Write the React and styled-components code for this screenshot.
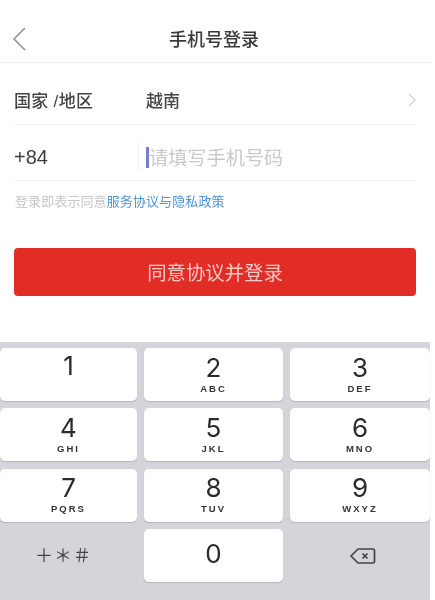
import React from 'react';
import styled, { createGlobalStyle } from 'styled-components';

const GlobalStyle = createGlobalStyle`
  html, body {
    margin: 0;
    padding: 0;
    background: #fff;
  }
  body {
    font-family: "Liberation Sans", "Noto Sans CJK SC", sans-serif;
  }
`;

const Page = styled.div`
  width: 435px;
  height: 600px;
  overflow: hidden;
  display: flex;
  flex-direction: column;
  background: #fff;
  filter: blur(0.6px);
`;

const Header = styled.header`
  display: flex;
  align-items: center;
  justify-content: center;
  position: relative;
  height: 63px;
  margin-right: 3px;
  padding-top: 13px;
  box-sizing: border-box;
  border-bottom: 1px solid #eeeeee;
`;

const BackIcon = styled.svg`
  position: absolute;
  left: 11px;
  top: 26px;
  width: 16px;
  height: 26px;
  fill: none;
  stroke: #8f8f8f;
  stroke-width: 1.5px;
`;

const Title = styled.h1`
  margin: 0;
  font-size: 18px;
  font-weight: 500;
  color: #3a3a3a;
  transform: translateX(-2px);
`;

const Form = styled.section`
  display: flex;
  flex-direction: column;
  margin: 0 19px 0 14px;
`;

const Row = styled.div`
  display: flex;
  align-items: center;
  height: ${({ $height }) => $height}px;
  padding-top: ${({ $pad }) => $pad}px;
  box-sizing: border-box;
  border-bottom: 1px solid #f0f0f0;
`;

const Label = styled.span`
  width: 132px;
  flex-shrink: 0;
  font-size: 17px;
  font-weight: 500;
  letter-spacing: 0.3px;
  color: #444;
  white-space: pre;
`;

const Value = styled.span`
  flex: 1;
  font-size: 17px;
  font-weight: 500;
  color: #444;
`;

const Chevron = styled.svg`
  width: 9px;
  height: 14px;
  fill: none;
  stroke: #d4d4d4;
  stroke-width: 1.3px;
`;

const Code = styled.span`
  width: 124px;
  flex-shrink: 0;
  font-size: 20px;
  color: #3d3d3d;
`;

const Divider = styled.span`
  width: 1px;
  height: 28px;
  margin-right: 7px;
  background: #f0f0f0;
`;

const Caret = styled.span`
  width: 3px;
  height: 21px;
  background: #6f82c9;
`;

const Placeholder = styled.span`
  font-size: 19.2px;
  color: #c9c9c9;
`;

const Agreement = styled.p`
  margin: 13px 0 0 15px;
  font-size: 13px;
  line-height: 16px;
  letter-spacing: 0.1px;
  color: #c6c6c6;
`;

const AgreementLink = styled.span`
  color: #4f94d8;
`;

const SubmitButton = styled.button`
  display: block;
  width: 402px;
  height: 48px;
  margin: 38px 0 0 14px;
  padding: 0 0 2px;
  border: 0;
  border-radius: 4px;
  background: #e12d26;
  color: #f6c9c5;
  font-family: inherit;
  font-size: 19.4px;
`;

const Keyboard = styled.div`
  display: grid;
  grid-template-columns: 137px 139px 140px;
  grid-auto-rows: 53px;
  column-gap: 7px;
  row-gap: 7.3px;
  width: 430px;
  height: 258px;
  margin-top: 46px;
  padding-top: 6px;
  box-sizing: border-box;
  background: #d3d5da;
`;

const Key = styled.div`
  display: flex;
  flex-direction: column;
  align-items: center;
  justify-content: ${({ $top }) => ($top ? 'flex-start' : 'center')};
  padding: ${({ $top }) => ($top ? '3px 0 0' : '0 0 3px')};
  box-sizing: border-box;
  border-radius: 5px;
  background: #fff;
  box-shadow: 0 1px 1px #b4b6bb;
  color: #2b2b2b;
`;

const Digit = styled.span`
  font-family: "Inter", "Liberation Sans", sans-serif;
  font-size: 26px;
  font-weight: 400;
  line-height: 30px;
`;

const Letters = styled.span`
  font-size: 9.5px;
  font-weight: 700;
  line-height: 11px;
  letter-spacing: 2px;
  color: #333;
`;

const FnKey = styled.div`
  display: flex;
  align-items: center;
  justify-content: center;
  color: #444;
`;

const Symbols = styled.span`
  font-size: 18px;
  letter-spacing: 1px;
  transform: translate(-5px, -1px);
`;

const BackspaceIcon = styled.svg`
  width: 27px;
  height: 20px;
  fill: none;
  stroke: #444;
  stroke-width: 1.7px;
  stroke-linejoin: round;
  transform: translate(2px, 1px);
`;

const keys = [
  ['1', ''],
  ['2', 'ABC'],
  ['3', 'DEF'],
  ['4', 'GHI'],
  ['5', 'JKL'],
  ['6', 'MNO'],
  ['7', 'PQRS'],
  ['8', 'TUV'],
  ['9', 'WXYZ'],
];

const App = () => (
  <>
    <GlobalStyle />
    <Page>
      <Header>
        <BackIcon viewBox="0 0 16 26">
          <polyline points="14,2 3,13 14,24" />
        </BackIcon>
        <Title>手机号登录</Title>
      </Header>
      <Form>
        <Row $height={62} $pad={12}>
          <Label>国家 /地区</Label>
          <Value>越南</Value>
          <Chevron viewBox="0 0 9 14">
            <polyline points="2,1 8,7 2,13" />
          </Chevron>
        </Row>
        <Row $height={56} $pad={9}>
          <Code>+84</Code>
          <Divider />
          <Caret />
          <Placeholder>请填写手机号码</Placeholder>
        </Row>
      </Form>
      <Agreement>
        登录即表示同意<AgreementLink>服务协议与隐私政策</AgreementLink>
      </Agreement>
      <SubmitButton type="button">同意协议并登录</SubmitButton>
      <Keyboard>
        {keys.map(([digit, letters]) => (
          <Key key={digit} $top={!letters}>
            <Digit>{digit}</Digit>
            {letters && <Letters>{letters}</Letters>}
          </Key>
        ))}
        <FnKey>
          <Symbols>＋＊＃</Symbols>
        </FnKey>
        <Key>
          <Digit>0</Digit>
        </Key>
        <FnKey>
          <BackspaceIcon viewBox="0 0 27 20">
            <path d="M9 3h15a1.5 1.5 0 0 1 1.5 1.5v11A1.5 1.5 0 0 1 24 17H9l-7-7z" />
            <path d="M13.5 7.5l5 5M18.5 7.5l-5 5" />
          </BackspaceIcon>
        </FnKey>
      </Keyboard>
    </Page>
  </>
);

export default App;
